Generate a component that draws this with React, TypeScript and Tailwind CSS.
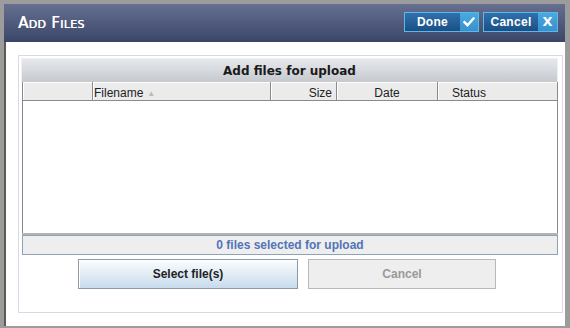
import React from "react";

export default function App() {
  return (
    <div className="w-[570px] h-[328px] bg-[#9c9c9c] pt-[4px] pl-[4px] pr-[5px] pb-[2px] [font-family:'Liberation_Sans',Arial,sans-serif]">
      <div className="h-full bg-white flex flex-col">
        {/* header */}
        <div className="h-[38px] shrink-0 flex items-center justify-between pl-[14px] pr-[7px] bg-[linear-gradient(#666f90,#3a4668)]">
          <div className="text-[15px] tracking-[0.3px] text-white [font-variant-caps:small-caps] [font-family:'DejaVu_Sans',sans-serif] font-normal mt-[1px] [text-shadow:0.4px_0_0_#fff]">
            Add Files
          </div>
          <div className="flex gap-[4px] mt-[-2px]">
            <button className="flex h-[20px] w-[75px] border border-[#5fb7e6] bg-[linear-gradient(#2f71ac,#1b4f86)]">
              <span className="flex-1 flex items-center justify-center text-[12px] font-bold text-white tracking-[0.3px]">Done</span>
              <span className="w-[18px] h-full flex items-center justify-center bg-[linear-gradient(#4aa9e0,#3791cf)]">
                <svg width="12" height="10" viewBox="0 0 12 10">
                  <path d="M1.5 5.2 L4.5 8.2 L10.5 1.5" fill="none" stroke="white" strokeWidth="2.4" strokeLinecap="square" />
                </svg>
              </span>
            </button>
            <button className="flex h-[20px] w-[75px] border border-[#5fb7e6] bg-[linear-gradient(#2f71ac,#1b4f86)]">
              <span className="flex-1 flex items-center justify-center text-[12px] font-bold text-white tracking-[0.3px]">Cancel</span>
              <span className="w-[19px] h-full flex items-center justify-center bg-[linear-gradient(#4aa9e0,#3791cf)] text-white text-[13px] font-bold [font-family:'DejaVu_Sans',sans-serif]">
                X
              </span>
            </button>
          </div>
        </div>
        {/* body */}
        <div className="flex-1 border-l-2 border-[#5b5b50] pl-[12px] pr-[2px] pt-[13px] pb-[13px] flex">
          <div className="flex-1 border border-[#d8d8e6] pl-[2px] pr-[4px] pt-[2px] flex flex-col">
            <div className="h-[24px] flex items-center justify-center bg-[linear-gradient(#e6e8ec,#c5c9ce)] border-t border-x border-[#eef0f2] text-[12px] font-bold text-[#1a1a1a] [font-family:'DejaVu_Sans',sans-serif]">
              Add files for upload
            </div>
            <div className="ml-[1px] border-x border-[#8a8a8a] flex flex-col">
              <div className="h-[19px] flex bg-[#ebebeb] border-b border-[#8a8a8a] text-[12px] text-[#222] leading-[14px]">
                <div className="w-[70px] border-r border-[#8a8a8a] shadow-[inset_1px_1px_0_#fff]" />
                <div className="w-[178px] border-r border-[#8a8a8a] flex items-end pl-[1px] shadow-[inset_1px_1px_0_#fff]">
                  Filename<span className="ml-[4px] text-[8px] text-[#bbb] leading-[12px]">▲</span>
                </div>
                <div className="w-[66px] border-r border-[#8a8a8a] flex items-end justify-end pr-[4px] shadow-[inset_1px_1px_0_#fff]">
                  Size
                </div>
                <div className="w-[101px] border-r border-[#8a8a8a] flex items-end justify-center shadow-[inset_1px_1px_0_#fff]">
                  Date
                </div>
                <div className="flex-1 flex items-end pl-[14px] shadow-[inset_1px_1px_0_#fff]">Status</div>
              </div>
              <div className="h-[132px] bg-white" />
            </div>
            <div className="ml-[1px] h-[2px] bg-[#b4b4b4]" />
            <div className="ml-[1px] h-[20px] border border-[#8fa2b6] bg-[#eeeeee] flex items-center justify-center text-[12px] font-bold text-[#5274b8]">
              0 files selected for upload
            </div>
            <div className="flex gap-[10px] mt-[4px] pl-[57px]">
              <button className="w-[220px] h-[30px] border border-[#8e99a6] bg-[linear-gradient(#fbfdff,#c7dbec)] text-[12px] font-bold text-[#222] shadow-[inset_1px_1px_0_#fff]">
                Select file(s)
              </button>
              <button className="w-[188px] h-[30px] border border-[#b8b8b8] bg-[#eeeeee] text-[12px] font-bold text-[#999]">
                Cancel
              </button>
            </div>
          </div>
        </div>
      </div>
    </div>
  );
}
